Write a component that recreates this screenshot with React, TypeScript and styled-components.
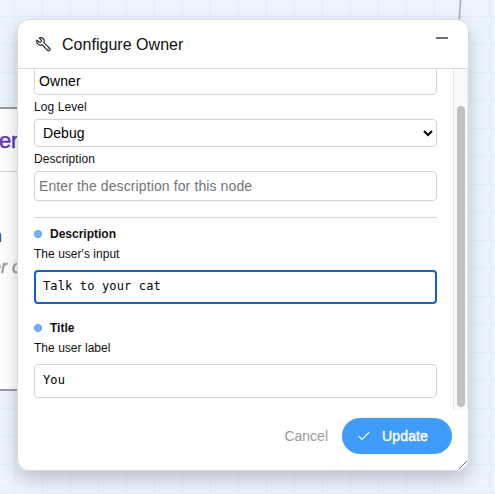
import React from "react";
import styled, { createGlobalStyle, css } from "styled-components";

const GlobalStyle = createGlobalStyle`
  * { box-sizing: border-box; }
  body { margin: 0; overflow: hidden; }
  input, select, textarea, button { font-family: inherit; margin: 0; }
`;

const Canvas = styled.main`
  position: relative;
  width: 495px;
  height: 494px;
  padding: 19px 0 0 17px;
  overflow: hidden;
  font-family: "Liberation Sans", Arial, sans-serif;
  color: #111;
  background-color: #eaf3fe;
  background-image: linear-gradient(to right, #deeefe 1px, transparent 1px),
    linear-gradient(to bottom, #deeefe 1px, transparent 1px);
  background-size: 28px 28px;
  background-position: 14px 16px;
`;

const Edge = styled.svg`
  position: absolute;
  left: 456px;
  top: 0;
`;

const Node = styled.section`
  position: absolute;
  left: -180px;
  top: 107px;
  width: 260px;
  height: 284px;
  background: #fff;
  border: 2px solid #9c9a9c;
`;

const NodeHeader = styled.div`
  display: flex;
  align-items: center;
  width: 196px;
  height: 63px;
  padding-top: 2px;
  justify-content: flex-end;
  border-bottom: 1px solid #d4d4d4;
  color: #673ab7;
  font-size: 22px;
  letter-spacing: -0.3px;
  -webkit-text-stroke: 0.5px;
`;

const NodeLine = styled.div<{ $muted?: boolean }>`
  width: ${(p) => (p.$muted ? 199 : 180)}px;
  margin-top: ${(p) => (p.$muted ? 10 : 54)}px;
  text-align: right;
  font-size: 18px;
  line-height: 21px;
  color: #333;
  ${(p) =>
    p.$muted &&
    css`
      font-style: italic;
      color: #999;
      -webkit-text-stroke: 0.4px;
    `}
`;

const Dialog = styled.section`
  position: relative;
  display: flex;
  flex-direction: column;
  width: 452px;
  height: 452px;
  background: #fff;
  border: 1px solid #d9d9d9;
  border-radius: 12px;
  overflow: hidden;
`;

const DialogShadow = styled.div`
  position: relative;
  width: 452px;
  border-radius: 12px;
  box-shadow: 0 8px 18px rgba(0, 0, 0, 0.2);
`;

const Header = styled.header`
  display: flex;
  align-items: center;
  flex: 0 0 49px;
  padding: 0 20px 0 18px;
  border-bottom: 1px solid #d9d9d9;
`;

const Title = styled.h1`
  flex: 1;
  margin: 2px 0 0 11px;
  font-size: 16px;
  font-weight: 400;
  letter-spacing: 0.03px;
`;

const Minimize = styled.button`
  width: 12px;
  height: 2px;
  margin-bottom: 12px;
  padding: 0;
  border: 0;
  background: #707070;
`;

const Body = styled.div`
  display: flex;
  flex: 0 0 341px;
  overflow: hidden;
`;

const Form = styled.form`
  flex: 1;
  height: 345px;
  margin-top: -4px;
  padding: 0 16px;
`;

const Track = styled.div`
  width: 15px;
  padding: 37px 3px 3px;
  border-left: 1px solid #e5e5e5;
  border-right: 1px solid #ededed;
  background: #fafafa;
`;

const Thumb = styled.div`
  height: 301px;
  width: 8px;
  border-radius: 4px;
  background: #c1c1c1;
`;

const fieldBox = css`
  display: block;
  width: 403px;
  border: 1px solid #d4d4d4;
  border-radius: 4px;
  background: #fff;
  color: #000;
  outline: none;
`;

const TextField = styled.input<{ $lowered?: boolean }>`
  ${fieldBox}
  height: 30px;
  padding: ${(p) => (p.$lowered ? "2px 4px 0" : "0 4px")};
  font-size: 14px;
  letter-spacing: 0.11px;
  &::placeholder { color: #757575; }
`;

const Select = styled.select`
  ${fieldBox}
  height: 28px;
  padding: 0 0 0 4px;
  font-size: 14px;
  letter-spacing: 0.1px;
`;

const TextArea = styled.textarea<{ $active?: boolean }>`
  ${fieldBox}
  height: 34px;
  padding: 7px 8px;
  resize: none;
  overflow: hidden;
  font-family: "DejaVu Sans Mono", monospace;
  font-size: 12px;
  line-height: 16px;
  letter-spacing: 0.15px;
  ${(p) =>
    p.$active &&
    css`
      border: 2px solid #155fc4;
      padding: 6px 7px;
    `}
`;

const Label = styled.label`
  display: block;
  height: 24px;
  line-height: 24px;
  font-size: 12px;
  letter-spacing: 0.08px;
`;

const Divider = styled.hr`
  width: 403px;
  height: 1px;
  margin: 16px 0 6px;
  border: 0;
  background: #d4d4d4;
`;

const PropertyName = styled.div`
  display: flex;
  align-items: center;
  gap: 8px;
  height: 20px;
  font-size: 12px;
  font-weight: bold;
`;

const Dot = styled.span`
  width: 8px;
  height: 8px;
  border: 1px solid #4a98ee;
  border-radius: 50%;
  background: #78b5fa;
`;

const Hint = styled.div`
  height: 26px;
  line-height: 20px;
  font-size: 12px;
  letter-spacing: 0.03px;
`;

const Property = styled.div`
  margin-bottom: 14px;
`;

const Footer = styled.footer`
  display: flex;
  justify-content: flex-end;
  align-items: flex-start;
  flex: 1;
  padding: 8px 16px 0;
`;

const Cancel = styled.button`
  height: 36px;
  padding: 0 14px;
  border: 0;
  background: none;
  color: #999;
  font-size: 14px;
  line-height: 36px;
`;

const Update = styled.button`
  display: flex;
  align-items: center;
  gap: 12px;
  width: 110px;
  height: 36px;
  padding: 0 0 0 16px;
  border: 0;
  border-radius: 18px;
  background: #409bfb;
  color: #fff;
  font-size: 14px;
  letter-spacing: 0.15px;
  -webkit-text-stroke: 0.4px;
`;

const ResizeHandle = styled.svg`
  position: absolute;
  right: 1px;
  bottom: 1px;
`;

function WrenchIcon() {
  return (
    <svg width="15" height="15" viewBox="0 0 15 15" fill="none" stroke="#222" strokeWidth="1.15" strokeLinejoin="round">
      <path d="M3.2 1.1a3.5 3.5 0 0 1 4.7 4.7l5.7 5.3a1.5 1.5 0 0 1-2.1 2.2L6 7.7A3.6 3.6 0 0 1 1 3.2l2.4 2.1 1.7-.4.3-1.8z" />
      <path d="M11.8 11.6h.7" />
    </svg>
  );
}

function CheckIcon() {
  return (
    <svg width="12" height="10" viewBox="0 0 12 10" fill="none" stroke="#fff" strokeWidth="1.15">
      <path d="M.7 5.1 4 8.5 11.3 1.2" />
    </svg>
  );
}

type PropertyFieldProps = { name: string; hint: string; value: string; active?: boolean };

function PropertyField({ name, hint, value, active }: PropertyFieldProps) {
  return (
    <Property>
      <PropertyName><Dot />{name}</PropertyName>
      <Hint>{hint}</Hint>
      <TextArea $active={active} defaultValue={value} aria-label={name} rows={1} spellCheck={false} />
    </Property>
  );
}

export default function App() {
  return (
    <Canvas>
      <GlobalStyle />
      <Edge width="8" height="24" viewBox="0 0 8 24">
        <path d="M4.5 0 3 24" stroke="#aaa" strokeWidth="1.6" />
      </Edge>
      <Node>
        <NodeHeader>Owner</NodeHeader>
        <NodeLine>Description</NodeLine>
        <NodeLine $muted>user c</NodeLine>
      </Node>
      <DialogShadow>
        <Dialog role="dialog" aria-label="Configure Owner">
          <Header>
            <WrenchIcon />
            <Title>Configure Owner</Title>
            <Minimize aria-label="Minimize" />
          </Header>
          <Body>
            <Form>
              <TextField $lowered defaultValue="Owner" aria-label="Name" />
              <Label htmlFor="level">Log Level</Label>
              <Select id="level" defaultValue="Debug">
                <option>Debug</option>
              </Select>
              <Label htmlFor="description">Description</Label>
              <TextField id="description" placeholder="Enter the description for this node" />
              <Divider />
              <PropertyField name="Description" hint="The user's input" value="Talk to your cat" active />
              <PropertyField name="Title" hint="The user label" value="You" />
            </Form>
            <Track><Thumb /></Track>
          </Body>
          <Footer>
            <Cancel type="button">Cancel</Cancel>
            <Update type="button"><CheckIcon />Update</Update>
          </Footer>
          <ResizeHandle width="8" height="8" viewBox="0 0 8 8" stroke="#555" strokeWidth="0.9">
            <path d="M0 8 8 0M4.5 8 8 4.5" />
          </ResizeHandle>
        </Dialog>
      </DialogShadow>
    </Canvas>
  );
}
